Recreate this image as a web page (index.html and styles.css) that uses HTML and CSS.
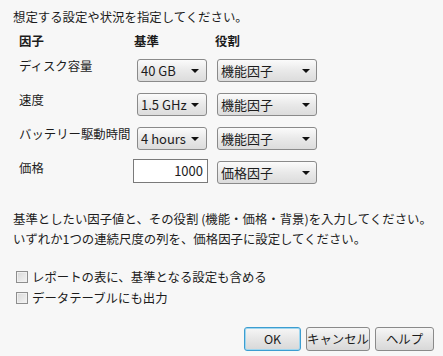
FILE: index.html
```html
<!DOCTYPE html>
<html lang="ja">
<head>
  <meta charset="UTF-8">
  <title>設定の指定</title>
  <link rel="stylesheet" href="styles.css">
</head>
<body>
  <div class="dialog">
    <p class="intro">想定する設定や状況を指定してください。</p>

    <div class="grid">
      <div class="head">因子</div>
      <div class="head">基準</div>
      <div class="head">役割</div>

      <div class="lbl">ディスク容量</div>
      <div class="sel base"><span>40 GB</span><i class="arrow"></i></div>
      <div class="sel role"><span>機能因子</span><i class="arrow"></i></div>

      <div class="lbl">速度</div>
      <div class="sel base"><span>1.5 GHz</span><i class="arrow"></i></div>
      <div class="sel role"><span>機能因子</span><i class="arrow"></i></div>

      <div class="lbl">バッテリー駆動時間</div>
      <div class="sel base"><span>4 hours</span><i class="arrow"></i></div>
      <div class="sel role"><span>機能因子</span><i class="arrow"></i></div>

      <div class="lbl">価格</div>
      <input class="num" type="text" value="1000">
      <div class="sel role"><span>価格因子</span><i class="arrow"></i></div>
    </div>

    <p class="note">基準としたい因子値と、その役割 (機能・価格・背景)を入力してください。<br>いずれか1つの連続尺度の列を、価格因子に設定してください。</p>

    <div class="checks">
      <label class="chk"><span class="box"></span>レポートの表に、基準となる設定も含める</label>
      <label class="chk"><span class="box"></span>データテーブルにも出力</label>
    </div>

    <div class="buttons">
      <button class="btn ok">OK</button>
      <button class="btn cancel">キャンセル</button>
      <button class="btn help">ヘルプ</button>
    </div>
  </div>
</body>
</html>
```

FILE: styles.css
```css
body {
  margin: 0;
  background: #f7f7f7;
  font-family: "Noto Sans CJK JP", "Noto Sans", sans-serif;
  font-size: 12.4px;
  color: #1c1c1c;
}

.dialog {
  padding: 8px 9px 0 13px;
}

.intro {
  margin: 0;
  line-height: 18px;
}

.grid {
  display: grid;
  grid-template-columns: 115px 81px 100px;
  grid-template-rows: 16px;
  grid-auto-rows: 23px;
  row-gap: 11px;
  margin: 6px 0 0 6px;
}

.head {
  font-weight: bold;
  line-height: 18px;
  height: 16px;
}

.lbl {
  line-height: 14px;
  align-self: start;
}

.sel {
  position: relative;
  height: 23px;
  box-sizing: border-box;
  border: 1px solid #8a8a8a;
  border-radius: 3px;
  background: linear-gradient(#fbfbfb, #e9e9e9 50%, #dcdcdc);
  line-height: 21px;
  padding-left: 3px;
  font-size: 13px;
}

.base {
  width: 70px;
  margin-left: 3px;
}

.role {
  width: 100px;
  margin-left: 2px;
}

.arrow {
  position: absolute;
  top: 9px;
  right: 6px;
  border-left: 4px solid transparent;
  border-right: 4px solid transparent;
  border-top: 4px solid #111;
}

.base .arrow {
  right: 7px;
}

.num {
  width: 75px;
  height: 24px;
  margin: -2px 0 0 -1px;
  box-sizing: border-box;
  border: 1px solid #7a7a7a;
  background: #fff;
  text-align: right;
  padding: 0 4px 2px 0;
  font: 13px "Noto Sans CJK JP", sans-serif;
  color: #1c1c1c;
}

.note {
  margin: 25px 0 0;
  line-height: 20px;
}

.checks {
  margin-top: 17px;
  padding-left: 3px;
}

.chk {
  display: flex;
  align-items: center;
  gap: 4px;
  height: 21px;
}

.box {
  width: 10px;
  height: 10px;
  border: 1px solid #8e8e8e;
  background: linear-gradient(135deg, #d8d8d8, #f4f4f4);
  box-shadow: inset 0 0 0 1px #f0f0f0;
}

.buttons {
  display: flex;
  justify-content: flex-end;
  gap: 5px;
  margin-top: 19px;
}

.btn {
  height: 24px;
  box-sizing: border-box;
  border: 1px solid #8a8a8a;
  border-radius: 3px;
  background: linear-gradient(#f6f6f6, #e6e6e6 50%, #d8d8d8);
  font: 12.4px "Noto Sans CJK JP", sans-serif;
  color: #1c1c1c;
  padding: 0;
}

.ok {
  width: 57px;
  border-color: #3c9dd0;
  box-shadow: inset 0 0 0 1px #9fd6ef;
}

.cancel {
  width: 64px;
}

.help {
  width: 59px;
}
```
